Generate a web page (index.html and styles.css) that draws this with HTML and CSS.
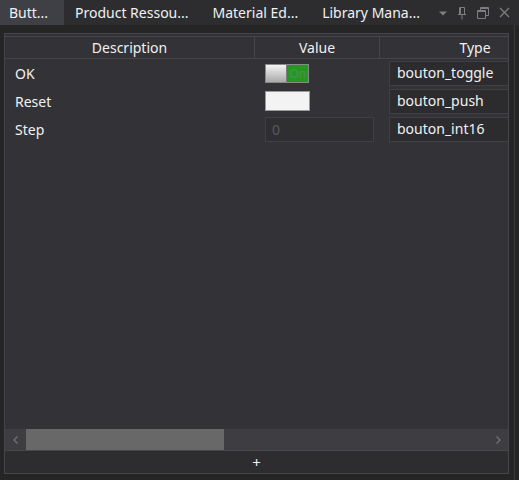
FILE: index.html
```html
<!DOCTYPE html>
<html>
<head>
<meta charset="utf-8">
<link rel="stylesheet" href="styles.css">
</head>
<body>
<div class="tabs">
  <div class="tab active">Butt...</div>
  <div class="tab">Product Ressou...</div>
  <div class="tab">Material Ed...</div>
  <div class="tab">Library Mana...</div>
  <div class="tab-icons">
    <svg class="ic" width="10" height="6" viewBox="0 0 10 6"><path d="M1 1.5h8L5 5.5z" fill="#7e7e82"/></svg>
    <svg class="ic" width="10" height="14" viewBox="0 0 10 14"><path d="M2.5 1.5h5v7h-5zM1 8.5h8M5 8.5v5M3.5 1.5v7" fill="none" stroke="#7e7e82" stroke-width="1"/></svg>
    <svg class="ic" width="14" height="14" viewBox="0 0 14 14"><path d="M4.5 1.5h8v8h-3M4.5 1.5v3M4.5 2.5h8" fill="none" stroke="#7e7e82" stroke-width="1"/><path d="M1.5 4.5h8v8h-8zM1.5 5.5h8" fill="none" stroke="#7e7e82" stroke-width="1"/></svg>
    <svg class="ic" width="11" height="11" viewBox="0 0 11 11"><path d="M1 1l9 9M10 1l-9 9" stroke="#7e7e82" stroke-width="1.3"/></svg>
  </div>
</div>
<div class="frame">
  <div class="panel">
    <div class="grid">
      <div class="hcell">Description</div>
      <div class="hcell">Value</div>
      <div class="hcell last">Type</div>

      <div class="cell desc">OK</div>
      <div class="cell val"><div class="toggle"><span class="knob"></span><span class="on">On</span></div></div>
      <div class="cell typ"><div class="tbox">bouton_toggle</div></div>

      <div class="cell desc">Reset</div>
      <div class="cell val"><div class="push"></div></div>
      <div class="cell typ"><div class="tbox">bouton_push</div></div>

      <div class="cell desc">Step</div>
      <div class="cell val"><div class="num">0</div></div>
      <div class="cell typ"><div class="tbox">bouton_int16</div></div>
    </div>
    <div class="spacer"></div>
    <div class="hscroll">
      <div class="arrow"><svg width="8" height="10" viewBox="0 0 8 10"><path d="M5.5 1.5L2 5l3.5 3.5" fill="none" stroke="#6a6a6e" stroke-width="1.6"/></svg></div>
      <div class="thumb"></div>
      <div class="track"></div>
      <div class="arrow"><svg width="8" height="10" viewBox="0 0 8 10"><path d="M2.5 1.5L6 5 2.5 8.5" fill="none" stroke="#6a6a6e" stroke-width="1.6"/></svg></div>
    </div>
    <div class="footer">+</div>
  </div>
</div>
</body>
</html>
```

FILE: styles.css
```css
html, body {
  margin: 0;
  padding: 0;
}
body {
  width: 519px;
  height: 480px;
  background: #252526;
  font-family: "Noto Sans", "Open Sans", sans-serif;
  font-size: 14px;
  color: #f1f1f1;
  overflow: hidden;
}
.tabs {
  height: 25px;
  background: #2d2d30;
  display: flex;
  align-items: stretch;
  position: relative;
}
.tab {
  display: flex;
  align-items: center;
  padding: 0 12px 0 9px;
  white-space: nowrap;
  font-size: 14px;
  margin-right: 1px;
}
.tab.active {
  background: #3f3f46;
  width: 64px;
  box-sizing: border-box;
  margin-right: 2px;
}
.tab:nth-child(3) { padding-left: 11px; }
.tab:nth-child(4) { padding-left: 11px; }
.tab-icons {
  display: flex;
  align-items: center;
  gap: 9px;
  margin-left: auto;
  padding-right: 9px;
}
.ic { display: block; }
.frame {
  height: 455px;
  box-sizing: border-box;
  padding: 8px 5px 6px 4px;
  border-right: 1px solid #3a3a3d;
  margin-right: 4px;
  width: 515px;
}
.panel {
  height: 100%;
  box-sizing: border-box;
  border: 1px solid #46464a;
  background: #333337;
  display: flex;
  flex-direction: column;
  overflow: hidden;
}
.grid {
  display: grid;
  grid-template-columns: 250px 125px 190px;
  grid-template-rows: 23px 28px 28px 28px;
  margin-top: 2px;
  width: 565px;
}
.hcell {
  border-top: 1px solid #46464a;
  border-bottom: 1px solid #46464a;
  border-right: 1px solid #46464a;
  display: flex;
  align-items: center;
  justify-content: center;
  background: #333337;
}
.hcell.last { border-right: none; }
.cell {
  display: flex;
  align-items: center;
}
.desc { padding-left: 10px; }
.val { padding-left: 10px; }
.typ { padding-left: 9px; }
.toggle {
  width: 44px;
  height: 19px;
  box-sizing: border-box;
  border: 1px solid #8a8a8a;
  display: flex;
  background: #2b9a2b;
}
.knob {
  width: 21px;
  height: 100%;
  background: linear-gradient(#f4f4f4, #a9a9a9);
  border-right: 1px solid #7a7a7a;
  box-sizing: border-box;
}
.on {
  flex: 1;
  color: #5a8a5a;
  font-size: 12px;
  line-height: 17px;
  text-align: center;
  background: #229a22;
}
.push {
  width: 45px;
  height: 20px;
  box-sizing: border-box;
  border: 1px solid #9a9a9a;
  background: #f3f3f3;
}
.num {
  width: 109px;
  height: 25px;
  box-sizing: border-box;
  border: 1px solid #3f3f44;
  background: #2f2f32;
  color: #58585c;
  padding-left: 6px;
  line-height: 23px;
}
.tbox {
  width: 180px;
  height: 25px;
  box-sizing: border-box;
  border: 1px solid #3f3f44;
  background: #2c2c2f;
  padding-left: 7px;
  line-height: 22px;
}
.spacer { flex: 1; }
.hscroll {
  height: 21px;
  display: flex;
  background: #3e3e42;
  border-bottom: 1px solid #48484c;
}
.arrow {
  width: 21px;
  display: flex;
  align-items: center;
  justify-content: center;
}
.thumb {
  width: 198px;
  background: #686868;
}
.track { flex: 1; }
.footer {
  height: 22px;
  background: #2d2d30;
  display: flex;
  align-items: center;
  justify-content: center;
  font-size: 15px;
}
```
